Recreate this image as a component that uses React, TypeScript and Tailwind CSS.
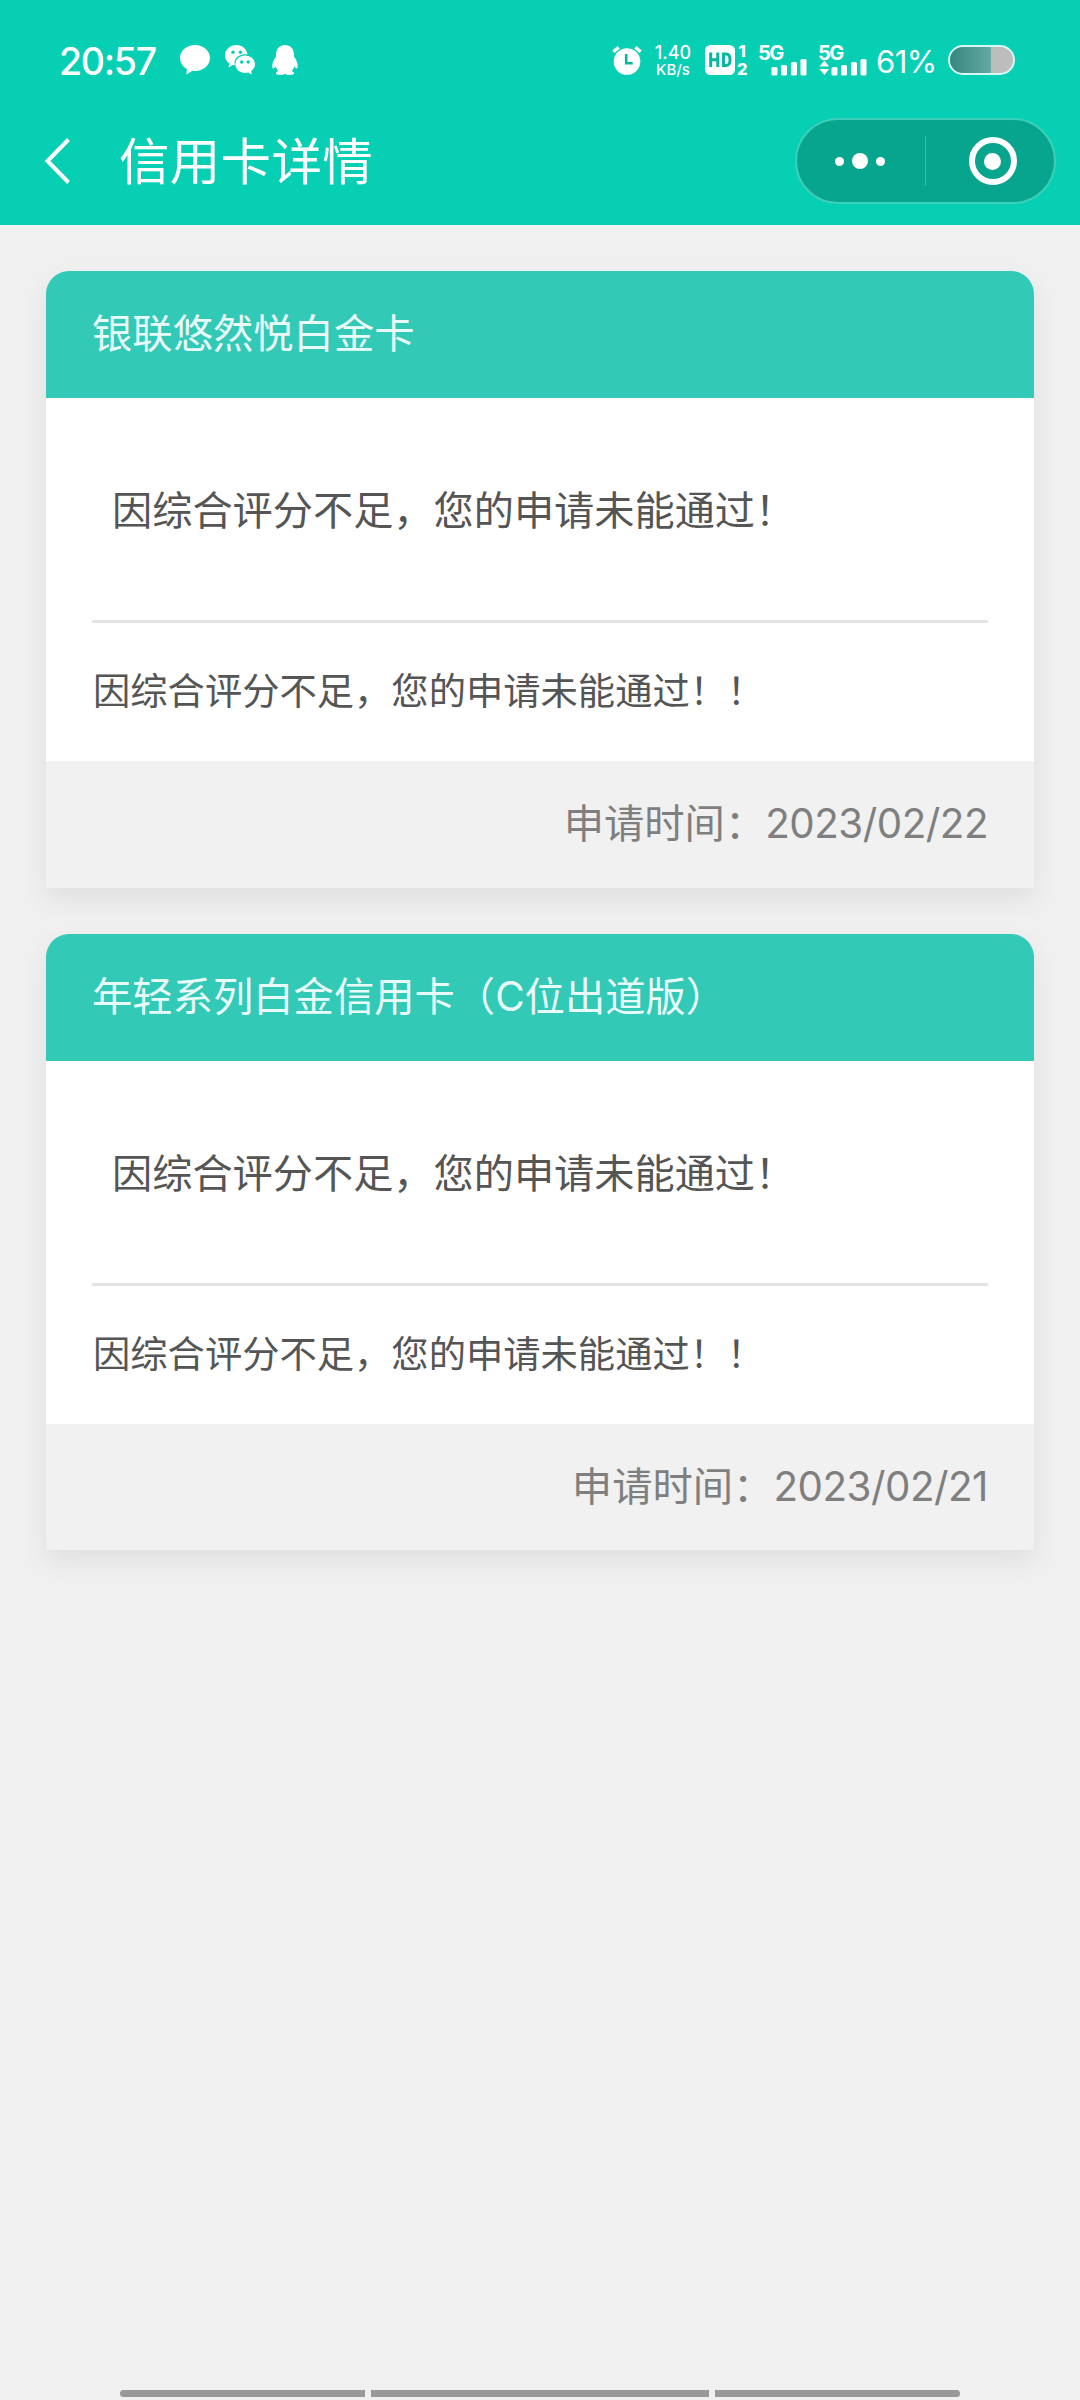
interface Application {
  id: number;
  name: string;
  result: string;
  detail: string;
  date: string;
}

const applications: Application[] = [
  {
    id: 1,
    name: "银联悠然悦白金卡",
    result: "因综合评分不足，您的申请未能通过！",
    detail: "因综合评分不足，您的申请未能通过！！",
    date: "2023/02/22",
  },
  {
    id: 2,
    name: "年轻系列白金信用卡（C位出道版）",
    result: "因综合评分不足，您的申请未能通过！",
    detail: "因综合评分不足，您的申请未能通过！！",
    date: "2023/02/21",
  },
];

function ChatIcon() {
  return (
    <svg width="30" height="30" viewBox="0 0 30 30" fill="currentColor">
      <path d="M15 0C6.700 0 0 5.800 0 13c0 4.600 2.700 8.700 6.900 11l-.5 5.600 6.200-3.800c.8.100 1.600.2 2.400.2 8.300 0 15-5.800 15-13S23.300 0 15 0z" />
    </svg>
  );
}

function WechatIcon() {
  return (
    <svg width="30" height="30" viewBox="0 0 30 30" fill="currentColor">
      <path d="M11.500 0C5.200 0 0 4.600 0 10.400c0 3.300 1.700 6.200 4.300 8.100l-.9 4 4.400-2.500c.7.200 1.400.3 2.100.3A9.500 9.500 0 0 1 9.500 18c0-4.900 4.700-8.700 10.400-8.700.9 0 1.800.1 2.700.3C21.900 4.200 17.200 0 11.500 0z" />
      <path d="M20 10.600c-5.400 0-9.600 3.900-9.600 8.700S14.600 28 20 28c1.100 0 2.200-.2 3.200-.5l3.600 2.300-.6-3.900c2.300-1.600 3.800-4 3.800-6.600 0-4.800-4.600-8.700-10-8.700z" />
      <g className="fill-[#07cfb3]">
        <circle cx="8" cy="7.200" r="1.700" />
        <circle cx="15.500" cy="7.200" r="1.700" />
        <circle cx="16.700" cy="17" r="1.700" />
        <circle cx="23.200" cy="17" r="1.700" />
      </g>
    </svg>
  );
}

function PenguinIcon() {
  return (
    <svg width="26" height="30" viewBox="0 0 26 30" fill="currentColor">
      <path d="M13 0C7.500 0 4 4 4 9.500v2C2.200 14 .3 17.300.3 20.800c0 1.700.5 2.700 1.100 2.700.8 0 1.700-1.200 2.300-2.300.5 2 1.400 3.600 2.600 4.900-1.400.5-2.400 1.300-2.400 2.200 0 1.200 2 1.700 4.600 1.700 1.900 0 3.600-.4 4.500-1.200.9.800 2.600 1.200 4.500 1.200 2.600 0 4.600-.5 4.600-1.700 0-.9-1-1.700-2.400-2.200 1.200-1.300 2.100-2.900 2.600-4.900.6 1.100 1.500 2.300 2.300 2.300.6 0 1.100-1 1.100-2.700 0-3.500-1.900-6.800-3.700-9.300v-2C22 4 18.500 0 13 0z" />
    </svg>
  );
}

function AlarmIcon() {
  return (
    <svg width="30" height="30" viewBox="0 0 30 30" fill="none">
      <circle cx="15" cy="16.500" r="13.300" fill="currentColor" />
      <path d="M1.300 6.800l5.400-4.600M28.700 6.800l-5.400-4.600" stroke="currentColor" strokeWidth="3.400" />
      <path d="M14.200 9v9.300h6.500" className="stroke-[#07b79e]" strokeWidth="2.600" />
    </svg>
  );
}

function HdIcon() {
  return (
    <div className="flex h-[30px] w-[43px] gap-[2px]">
      <svg className="shrink-0" width="30" height="30" viewBox="0 0 30 30" fill="currentColor">
        <rect width="30" height="30" rx="5.500" />
        <g className="stroke-[#07b79e]" strokeWidth="3" fill="none">
          <path d="M5.700 7.500v14.500M12.800 7.500v14.500M5.700 14.700h7.100" />
          <path d="M18.500 9h2.500q4 0 4 5.800t-4 5.800h-2.500z" />
        </g>
      </svg>
      <div className="-mt-[3px] flex flex-col items-center text-[16.500px] leading-[18px] font-extrabold">
        <span>1</span>
        <span>2</span>
      </div>
    </div>
  );
}

function SignalIcon({ transfer = false }: { transfer?: boolean }) {
  return (
    <div className="relative h-[32px] w-[48px]">
      <span className="absolute -top-[4px] -left-[1px] text-[20px] leading-[24px] font-bold tracking-[-1.500px]">5G</span>
      <svg width="48" height="32" viewBox="0 0 48 32" fill="currentColor">
        {transfer && <path d="M0.500 21.500l4.800-6 4.800 6zM0.500 24l4.800 6 4.800-6z" />}
        <rect x="12.500" y="22" width="6" height="8.500" rx="1.500" />
        <rect x="22" y="20" width="6" height="10.500" rx="1.500" />
        <rect x="32" y="17" width="6" height="13.500" rx="1.500" />
        <rect x="41.500" y="14" width="6" height="16.500" rx="1.500" />
      </svg>
    </div>
  );
}

function StatusBar() {
  return (
    <div className="flex h-[98px] items-start pr-[65px] pl-[59px] pt-[45px]">
      <div className="flex items-start">
        <span className="w-[121px] text-[37.500px] leading-[34px] font-medium tracking-[-1.300px]">20:57</span>
        <div className="flex gap-[15px]">
          <ChatIcon />
          <WechatIcon />
          <span className="ml-[2px]"><PenguinIcon /></span>
        </div>
      </div>
      <div className="ml-auto flex items-start">
        <AlarmIcon />
        <div className="ml-[12px] flex w-[38px] flex-col text-center font-medium">
          <span className="text-[18px] leading-[15px]">1.40</span>
          <span className="pt-px text-[15px] leading-[17px]">KB/s</span>
        </div>
        <div className="ml-[13px]"><HdIcon /></div>
        <div className="ml-[11px]"><SignalIcon /></div>
        <div className="ml-[12px]"><SignalIcon transfer /></div>
        <span className="ml-[9px] w-[72px] text-[31px] leading-[33px] tracking-[-0.5px]">61%</span>
        <div className="h-[30px] w-[67px] overflow-hidden rounded-full border-2 border-[#d5f8f3] bg-[#bdbdbd]">
          <div className="h-full w-[65%] bg-linear-to-r from-[#36877f] to-[#63a9a4]" />
        </div>
      </div>
    </div>
  );
}

function NavBar() {
  return (
    <div className="flex h-[127px] items-center pr-[24px] pb-px pl-[44px]">
      <svg width="27" height="46" viewBox="0 0 27 46" fill="none" stroke="currentColor" strokeWidth="4">
        <path d="M24.500 1.500L3.500 23l21 21.500" />
      </svg>
      <h1 className="ml-[48px] pt-[2px] text-[50.500px] leading-[64px] tracking-[0.300px]">信用卡详情</h1>
      <div className="ml-auto flex h-[86px] w-[261px] items-center rounded-full border-2 border-[#3dcfb9] bg-[#07a48e]">
        <div className="flex w-[128px] items-center justify-center gap-2 pr-[2px]">
          <span className="size-[9px] rounded-full bg-white" />
          <span className="size-4 rounded-full bg-white" />
          <span className="size-[9px] rounded-full bg-white" />
        </div>
        <span className="h-[50px] w-px bg-[#3dbfae]" />
        <div className="flex flex-1 items-center justify-center pl-[5px]">
          <span className="flex size-12 items-center justify-center rounded-full border-[6px] border-white">
            <span className="size-[17px] rounded-full bg-white" />
          </span>
        </div>
      </div>
    </div>
  );
}

function ApplicationCard({ item }: { item: Application }) {
  return (
    <section className="rounded-t-[23px] bg-white shadow-[0_11px_26px_rgba(0,0,0,0.07)]">
      <h2 className="flex h-[127px] items-center rounded-t-[23px] bg-[#32c9b7] px-[46px] text-[40.320px] text-[#e9fbf9]">
        {item.name}
      </h2>
      <div className="px-[46px] text-[#555]">
        <p className="flex h-[225px] items-center border-b-[3px] border-[#e3e3e3] pt-[5px] pl-[20px] text-[40.200px]">
          {item.result}
        </p>
        <p className="flex h-[138px] items-center pl-px text-[37.300px]">{item.detail}</p>
      </div>
      <div className="flex h-[126.500px] items-center justify-end bg-[#f1f1f1] px-[46px] text-[40.320px] text-[#7f7f7f]">
        <span>申请时间：</span>
        <span className="tracking-[-0.500px]">{item.date}</span>
      </div>
    </section>
  );
}

export default function App() {
  return (
    <div className="flex h-[2400px] w-[1080px] flex-col bg-[#f0f0f0] font-['Inter','Noto_Sans_CJK_SC',sans-serif]">
      <header className="bg-[#07cfb3] text-white">
        <StatusBar />
        <NavBar />
      </header>

      <main className="flex flex-col gap-[46px] px-[46px] pt-[46px]">
        {applications.map((item) => (
          <ApplicationCard key={item.id} item={item} />
        ))}
      </main>

      <div className="mt-auto flex justify-center gap-[6px] pb-[3px]">
        <span className="h-[7px] w-[245px] rounded-l-full bg-[#999]" />
        <span className="h-[7px] w-[338px] bg-[#999]" />
        <span className="h-[7px] w-[245px] rounded-r-full bg-[#999]" />
      </div>
    </div>
  );
}
